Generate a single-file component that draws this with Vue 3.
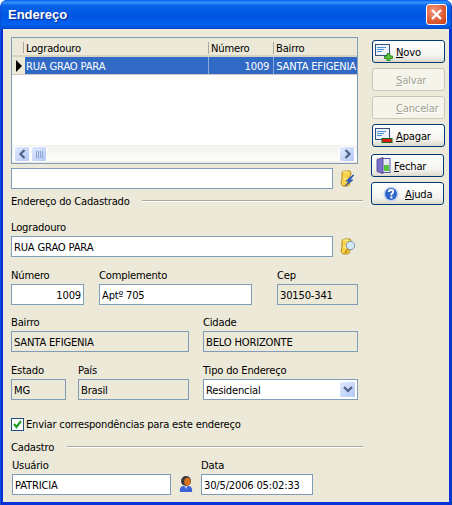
<template>
  <div class="window">
    <div class="titlebar">
      <span class="title">Endereço</span>
      <div class="close">
        <svg width="13" height="13" viewBox="0 0 13 13">
          <path d="M2 2 L11 11 M11 2 L2 11" stroke="#fff" stroke-width="2.4" />
        </svg>
      </div>
    </div>

    <div class="content">
      <div class="main">
        <div class="grid">
          <div class="grid-head">
            <div class="ind"></div>
            <div class="col c1">Logradouro</div>
            <div class="col c2">Número</div>
            <div class="col c3">Bairro</div>
          </div>
          <div class="grid-row">
            <div class="ind">
              <svg width="8" height="12" viewBox="0 0 8 12"><path d="M1 0 L7 6 L1 12 Z" fill="#000" /></svg>
            </div>
            <div class="cell c1">RUA GRAO PARA</div>
            <div class="cell c2 right">1009</div>
            <div class="cell c3">SANTA EFIGENIA</div>
          </div>
          <div class="grid-empty"></div>
          <div class="hscroll">
            <div class="sbtn">
              <svg width="9" height="10" viewBox="0 0 9 10"><path d="M6.5 1 L2.5 5 L6.5 9" fill="none" stroke="#4d6185" stroke-width="2.2" /></svg>
            </div>
            <div class="thumb">
              <svg width="7" height="7" viewBox="0 0 7 7"><path d="M0.5 0V7M2.5 0V7M4.5 0V7M6.5 0V7" stroke="#8ca6dc" /></svg>
            </div>
            <div class="track"></div>
            <div class="sbtn">
              <svg width="9" height="10" viewBox="0 0 9 10"><path d="M2.5 1 L6.5 5 L2.5 9" fill="none" stroke="#4d6185" stroke-width="2.2" /></svg>
            </div>
          </div>
        </div>

        <div class="with-icon search-row">
          <input class="box grow" type="text" value="" />
          <svg class="side-icon" width="16" height="18" viewBox="0 0 16 18">
            <path d="M2 3 Q2 1 5 1 L10 1 Q11 2 11 4 L9 8 L10 12 Q10 16 7 16 L3 16 Q1 15 1 13 L2 9 Z" fill="#f7d34b" stroke="#b98a16" />
            <path d="M3 2 L8 2 M3 9 L8 9" stroke="#fff3b0" />
            <path d="M13 5 L6 11 L9 11 L5 16 L13 10 L10 10 L14 5 Z" fill="#2b62d9" stroke="#123c94" stroke-width="0.6" />
          </svg>
        </div>

        <div class="section first-section">
          <span>Endereço do Cadastrado</span>
          <i class="rule"></i>
        </div>

        <div class="field logradouro">
          <label>Logradouro</label>
          <div class="with-icon">
            <input class="box grow" type="text" value="RUA GRAO PARA" />
            <svg class="side-icon" width="16" height="18" viewBox="0 0 16 18">
              <path d="M2 3 Q2 1 5 1 L10 1 Q11 2 11 4 L9 8 L10 12 Q10 16 7 16 L3 16 Q1 15 1 13 L2 9 Z" fill="#f7d34b" stroke="#b98a16" />
              <path d="M3 2 L8 2 M3 9 L8 9" stroke="#fff3b0" />
              <circle cx="10.5" cy="7.5" r="4.2" fill="#cfe9fb" stroke="#7f97a8" />
              <path d="M8 11 L5 15" stroke="#c98a1d" stroke-width="2" />
            </svg>
          </div>
        </div>

        <div class="row row-numero">
          <div class="field w-numero">
            <label>Número</label>
            <input class="box right" type="text" value="1009" />
          </div>
          <div class="field w-compl">
            <label>Complemento</label>
            <input class="box" type="text" value="Aptº 705" />
          </div>
          <div class="field w-cep">
            <label>Cep</label>
            <input class="box off" type="text" value="30150-341" readonly />
          </div>
        </div>

        <div class="row row-bairro">
          <div class="field w-bairro">
            <label>Bairro</label>
            <input class="box off" type="text" value="SANTA EFIGENIA" readonly />
          </div>
          <div class="field w-cidade">
            <label>Cidade</label>
            <input class="box off" type="text" value="BELO HORIZONTE" readonly />
          </div>
        </div>

        <div class="row row-estado">
          <div class="field w-estado">
            <label>Estado</label>
            <input class="box off" type="text" value="MG" readonly />
          </div>
          <div class="field w-pais">
            <label>País</label>
            <input class="box off" type="text" value="Brasil" readonly />
          </div>
          <div class="field w-cidade">
            <label>Tipo do Endereço</label>
            <div class="box combo">
              <span>Residencial</span>
              <div class="combo-btn">
                <svg width="10" height="7" viewBox="0 0 10 7"><path d="M1 1 L5 5 L9 1" fill="none" stroke="#4d6185" stroke-width="2.2" /></svg>
              </div>
            </div>
          </div>
        </div>

        <div class="check-row">
          <div class="check">
            <svg width="11" height="11" viewBox="0 0 11 11"><path d="M2 5 L4.5 8 L9 2" fill="none" stroke="#21a121" stroke-width="2.2" /></svg>
          </div>
          <span>Enviar correspondências para este endereço</span>
        </div>

        <div class="section second-section">
          <span>Cadastro</span>
          <i class="rule"></i>
        </div>

        <div class="row row-usuario">
          <div class="field w-usuario">
            <label>Usuário</label>
            <input class="box" type="text" value="PATRICIA" />
          </div>
          <svg class="user-icon" width="14" height="18" viewBox="0 0 14 18">
            <path d="M1 17 Q0 12 4 11 L10 11 Q14 12 13 17 Z" fill="#3b63d6" />
            <path d="M5 11 L7 14 L9 11 Z" fill="#a9c0f2" />
            <circle cx="7" cy="6" r="5" fill="#3a3a3a" />
            <ellipse cx="8.4" cy="6.8" rx="3.2" ry="4" fill="#d8701f" />
          </svg>
          <div class="field w-data">
            <label>Data</label>
            <input class="box" type="text" value="30/5/2006 05:02:33" />
          </div>
        </div>
      </div>

      <div class="buttons">
        <button class="btn">
          <svg width="18" height="18" viewBox="0 0 18 18">
            <rect x="0.5" y="1.5" width="14" height="11" fill="#eef3fb" stroke="#38507f" />
            <path d="M2 4.5H11M2 6.5H9M2 8.5H7" stroke="#4a90d8" />
            <path d="M9.5 13 H12 V10.5 H15 V13 H17.5 V15.5 H15 V18 H12 V15.5 H9.5 Z" fill="#5cc23c" stroke="#1d7a1d" stroke-width="0.8" />
          </svg>
          <span><u>N</u>ovo</span>
        </button>
        <button class="btn off-btn"><span class="no-icon"><u>S</u>alvar</span></button>
        <button class="btn off-btn"><span class="no-icon"><u>C</u>ancelar</span></button>
        <button class="btn">
          <svg width="18" height="18" viewBox="0 0 18 18">
            <rect x="0.5" y="1.5" width="14" height="11" fill="#eef3fb" stroke="#38507f" />
            <path d="M2 4.5H11M2 6.5H9M2 8.5H7" stroke="#4a90d8" />
            <rect x="7" y="11.5" width="10" height="4" fill="#e0161b" stroke="#126a12" />
          </svg>
          <span><u>A</u>pagar</span>
        </button>
        <button class="btn shifted fechar">
          <svg width="15" height="17" viewBox="0 0 15 17">
            <rect x="5" y="1.5" width="9" height="14" fill="#e6e8f4" stroke="#5b5aa8" />
            <rect x="8" y="8" width="5" height="6" fill="#55c23c" />
            <path d="M1 2.5 L7 0.5 V16.5 L1 14.5 Z" fill="#7d70c8" stroke="#403a8c" stroke-width="0.8" />
          </svg>
          <span><u>F</u>echar</span>
        </button>
        <button class="btn shifted ajuda">
          <svg width="16" height="16" viewBox="0 0 16 16">
            <circle cx="8" cy="8" r="7.5" fill="#c5d6f2" />
            <circle cx="8" cy="8" r="6" fill="#2f67c9" />
            <path d="M5.8 6 Q6 4 8 4 Q10.4 4 10.2 6 Q10 7.3 8.4 8 V9.4" fill="none" stroke="#fff" stroke-width="1.8" />
            <rect x="7.4" y="10.4" width="2" height="2" fill="#fff" />
          </svg>
          <span><u>A</u>juda</span>
        </button>
      </div>
    </div>
  </div>
</template>

<script setup>
</script>

<style>
html, body {
  margin: 0;
  background: #fff;
}
</style>

<style scoped>
.window {
  width: 452px;
  height: 505px;
  box-sizing: border-box;
  border-radius: 7px 7px 0 0;
  background: #0831d9;
  padding: 0 2px 3px;
  display: flex;
  flex-direction: column;
  overflow: hidden;
  font-family: "DejaVu Sans", Tahoma, sans-serif;
  font-size: 10px;
  letter-spacing: -0.2px;
  color: #000;
  border-left: 1px solid #0a4fd8;
  border-right: 1px solid #0a3bc0;
}

.titlebar {
  height: 29px;
  margin: 0 -2px;
  padding: 0 4px 1px 7px;
  box-sizing: border-box;
  flex: none;
  display: flex;
  align-items: center;
  justify-content: space-between;
  background: linear-gradient(180deg, #0058ee 0%, #3593ff 8%, #0663e8 20%, #0055e5 55%, #0261f0 85%, #0049c8 100%);
}

.title {
  font-family: "Liberation Sans", Arial, sans-serif;
  font-size: 13px;
  letter-spacing: 0;
  font-weight: bold;
  color: #fff;
  text-shadow: 1px 1px 1px #0a2a8c;
}

.close {
  width: 21px;
  height: 21px;
  box-sizing: border-box;
  border: 1px solid #fff;
  border-radius: 3px;
  background: radial-gradient(circle at 35% 30%, #f0977c, #dd5a33 60%, #c03a16);
  display: flex;
  align-items: center;
  justify-content: center;
}

.content {
  flex: 1;
  background: #ece9d8;
  display: flex;
  padding-left: 8px;
  gap: 14px;
  min-height: 0;
}

.main {
  width: 347px;
  flex: none;
}

.grid {
  margin-top: 8px;
  height: 127px;
  box-sizing: border-box;
  border: 1px solid #7f9db9;
  background: #fff;
  display: flex;
  flex-direction: column;
  overflow: hidden;
}

.grid-head, .grid-row {
  display: flex;
  flex: none;
}

.grid-head {
  height: 19px;
  box-sizing: border-box;
  background: #ece9d8;
  border-bottom: 2px solid #d6d2c2;
  align-items: flex-start;
  padding-top: 4px;
}

.grid-row {
  height: 18px;
  box-sizing: border-box;
  background: #316ac5;
  color: #fff;
  border-bottom: 1px solid #c9c7c0;
}

.ind {
  width: 12px;
  flex: none;
  box-sizing: border-box;
  background: #ece9d8;
  display: flex;
  align-items: center;
}

.grid-head .ind {
  height: 11px;
  border-right: 1px solid #aca899;
}

.grid-row .ind {
  width: 13px;
  padding-left: 3px;
}

.col, .cell {
  box-sizing: border-box;
  white-space: nowrap;
  overflow: hidden;
  padding: 0 2px;
}

.cell {
  line-height: 20px;
}

.col {
  line-height: 13px;
  height: 12px;
}

.c1 { width: 185px; }
.c2 { width: 65px; }
.c3 { width: 83px; }

.cell.c1 {
  padding-left: 1px;
}

.cell.c2 {
  padding-right: 4px;
}

.col.c1, .col.c2 {
  border-right: 1px solid #aca899;
}

.cell.c1, .cell.c2 {
  border-right: 1px solid #8fa9d9;
}

.right {
  text-align: right;
}

.grid-empty {
  flex: 1;
}

.hscroll {
  height: 18px;
  flex: none;
  display: flex;
  align-items: center;
  padding: 0 2px;
  background: linear-gradient(180deg, #f3f1ec, #fdfdfa 85%, #e9e7de);
}

.sbtn, .thumb, .combo-btn {
  box-sizing: border-box;
  border: 1px solid #fff;
  border-radius: 2px;
  background: linear-gradient(135deg, #e1eafe, #b4c8f6);
  display: flex;
  align-items: center;
  justify-content: center;
}

.sbtn {
  width: 16px;
  height: 16px;
}

.thumb {
  width: 16px;
  height: 16px;
  margin-left: 1px;
}

.track {
  flex: 1;
}

.with-icon {
  display: flex;
  align-items: center;
}

.search-row {
  margin-top: 4px;
}

.with-icon .grow {
  flex: none;
  width: 322px;
}

.side-icon {
  margin-left: 7px;
  flex: none;
}

.box {
  display: block;
  height: 21px;
  box-sizing: border-box;
  border: 1px solid #7f9db9;
  background: #fff;
  padding: 1px 2px 0;
  margin: 0;
  font: inherit;
  letter-spacing: inherit;
  color: #000;
  outline: none;
}

.off {
  background: #ece9d8;
}

.section {
  height: 14px;
  display: flex;
  align-items: flex-start;
  white-space: nowrap;
}

.section span {
  line-height: 16px;
  height: 14px;
}

.rule {
  flex: none;
  height: 2px;
  margin-top: 6px;
  background: linear-gradient(180deg, #aca899 50%, #fff 50%);
}

.first-section {
  margin-top: 5px;
}

.first-section .rule {
  margin-left: 12px;
  width: 221px;
}

.second-section {
  margin-top: 9px;
}

.second-section .rule {
  margin-left: 13px;
  width: 296px;
}

.field label {
  display: block;
  height: 14px;
  line-height: 14px;
  margin-bottom: 1px;
  white-space: nowrap;
}

.field input {
  width: 100%;
}

.logradouro {
  margin-top: 13px;
}

.row {
  display: flex;
  align-items: flex-end;
}

.row-numero { margin-top: 12px; }
.row-bairro { margin-top: 11px; gap: 14px; }
.row-estado { margin-top: 12px; }
.row-usuario { margin-top: 5px; padding-left: 1px; }

.w-numero { width: 73px; margin-right: 15px; }
.w-compl { width: 153px; margin-right: 25px; }
.w-cep { width: 81px; }
.w-bairro { width: 178px; }
.w-cidade { width: 155px; }
.w-estado { width: 55px; margin-right: 12px; }
.w-pais { width: 111px; margin-right: 14px; }
.w-usuario { width: 159px; }
.w-data { width: 112px; }

.user-icon {
  margin: 0 8px 2px 8px;
  flex: none;
}

.combo {
  display: flex;
  align-items: center;
  justify-content: space-between;
  padding: 0 1px 0 2px;
}

.combo span {
  margin-top: 2px;
}

.combo-btn {
  width: 17px;
  height: 17px;
}

.check-row {
  margin-top: 18px;
  height: 13px;
  display: flex;
  align-items: center;
  gap: 2px;
}

.check {
  width: 13px;
  height: 13px;
  box-sizing: border-box;
  border: 1px solid #1c5180;
  background: #fff;
  display: flex;
  align-items: center;
  justify-content: center;
}

.buttons {
  margin-top: 11px;
  display: flex;
  flex-direction: column;
  gap: 5px;
}

.btn {
  width: 73px;
  height: 23px;
  box-sizing: border-box;
  border: 1px solid #003c74;
  border-radius: 3px;
  background: linear-gradient(180deg, #fff 0%, #f4f3ee 70%, #dcd8cb 100%);
  font: inherit;
  letter-spacing: inherit;
  color: #000;
  padding: 0 0 0 2px;
  display: flex;
  align-items: center;
  gap: 3px;
}

.btn span {
  margin-top: 2px;
}

.off-btn {
  border-color: #c9c7ba;
  background: #f5f4ea;
  color: #a1a192;
  text-shadow: 1px 1px 0 #fff;
}

.no-icon {
  margin-left: 21px;
}

.shifted {
  margin-left: -1px;
}

.fechar {
  margin-top: 2px;
  padding-left: 4px;
}

.ajuda {
  padding-left: 11px;
  gap: 6px;
}
</style>
